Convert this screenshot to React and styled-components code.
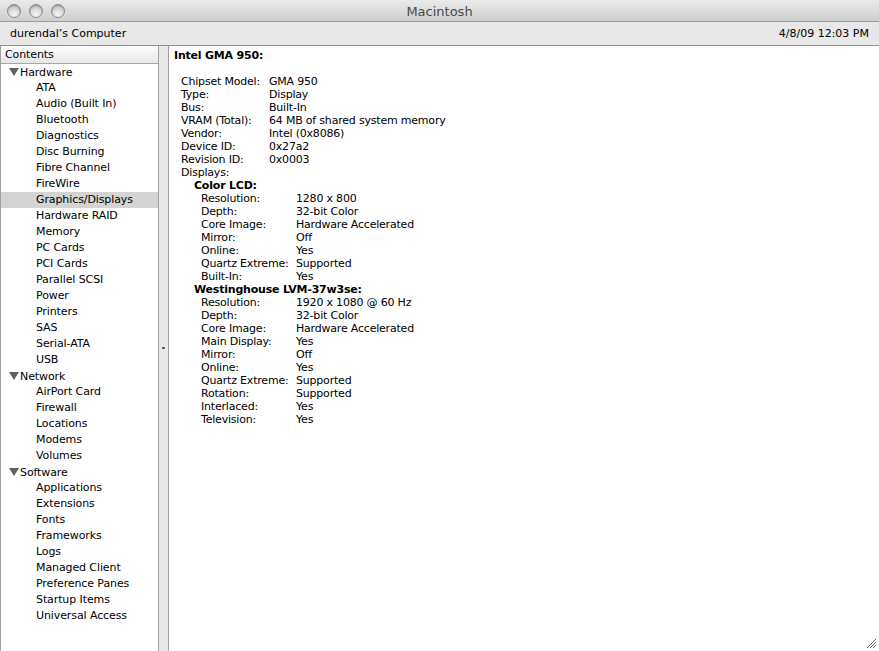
import React from 'react'
import styled, { createGlobalStyle } from 'styled-components'

const GlobalStyle = createGlobalStyle`
  html, body {
    margin: 0;
    padding: 0;
    background: #ffffff;
  }
  body {
    font-family: "DejaVu Sans", "Liberation Sans", sans-serif;
    font-size: 11px;
    color: #000;
  }
`

const sections = [
  {
    title: 'Hardware',
    items: ['ATA', 'Audio (Built In)', 'Bluetooth', 'Diagnostics', 'Disc Burning', 'Fibre Channel',
      'FireWire', 'Graphics/Displays', 'Hardware RAID', 'Memory', 'PC Cards', 'PCI Cards',
      'Parallel SCSI', 'Power', 'Printers', 'SAS', 'Serial-ATA', 'USB']
  },
  {
    title: 'Network',
    items: ['AirPort Card', 'Firewall', 'Locations', 'Modems', 'Volumes']
  },
  {
    title: 'Software',
    items: ['Applications', 'Extensions', 'Fonts', 'Frameworks', 'Logs', 'Managed Client',
      'Preference Panes', 'Startup Items', 'Universal Access']
  }
]

const details = [
  ['Chipset Model:', 'GMA 950'],
  ['Type:', 'Display'],
  ['Bus:', 'Built-In'],
  ['VRAM (Total):', '64 MB of shared system memory'],
  ['Vendor:', 'Intel (0x8086)'],
  ['Device ID:', '0x27a2'],
  ['Revision ID:', '0x0003'],
]

const displays = [
  {
    name: 'Color LCD:',
    rows: [
      ['Resolution:', '1280 x 800'],
      ['Depth:', '32-bit Color'],
      ['Core Image:', 'Hardware Accelerated'],
      ['Mirror:', 'Off'],
      ['Online:', 'Yes'],
      ['Quartz Extreme:', 'Supported'],
      ['Built-In:', 'Yes'],
    ]
  },
  {
    name: 'Westinghouse LVM-37w3se:',
    rows: [
      ['Resolution:', '1920 x 1080 @ 60 Hz'],
      ['Depth:', '32-bit Color'],
      ['Core Image:', 'Hardware Accelerated'],
      ['Main Display:', 'Yes'],
      ['Mirror:', 'Off'],
      ['Online:', 'Yes'],
      ['Quartz Extreme:', 'Supported'],
      ['Rotation:', 'Supported'],
      ['Interlaced:', 'Yes'],
      ['Television:', 'Yes'],
    ]
  }
]

const App = () => {
  return (
    <Window>
      <GlobalStyle />
      <TitleBar>
        <Lights>
          <Light />
          <Light />
          <Light />
        </Lights>
        <Title>Macintosh</Title>
      </TitleBar>
      <InfoBar>
        <span>durendal’s Computer</span>
        <span>4/8/09 12:03 PM</span>
      </InfoBar>
      <Main>
        <Sidebar>
          <SideHeader>Contents</SideHeader>
          {sections.map(sec => (
            <React.Fragment key={sec.title}>
              <GroupRow>
                <Triangle />
                {sec.title}
              </GroupRow>
              {sec.items.map(item => (
                <ItemRow key={item} selected={item === 'Graphics/Displays'}>{item}</ItemRow>
              ))}
            </React.Fragment>
          ))}
        </Sidebar>
        <Splitter>
          <Dimple />
        </Splitter>
        <Content>
          <Heading>Intel GMA 950:</Heading>
          <Spacer />
          <Table labelWidth={88} indent={7}>
            {details.map(([k, v]) => (
              <React.Fragment key={k}>
                <Label>{k}</Label>
                <Value>{v}</Value>
              </React.Fragment>
            ))}
            <Label>Displays:</Label>
            <Value />
          </Table>
          {displays.map(d => (
            <React.Fragment key={d.name}>
              <SubHeading>{d.name}</SubHeading>
              <Table labelWidth={95} indent={27}>
                {d.rows.map(([k, v]) => (
                  <React.Fragment key={k}>
                    <Label>{k}</Label>
                    <Value>{v}</Value>
                  </React.Fragment>
                ))}
              </Table>
            </React.Fragment>
          ))}
          <Grip>
            <svg width="11" height="11" viewBox="0 0 11 11">
              <path d="M10 1 L1 10 M10 4 L4 10 M10 7 L7 10" stroke="#6e6e6e" strokeWidth="1" />
              <path d="M11 2 L2 11 M11 5 L5 11 M11 8 L8 11" stroke="#ffffff" strokeWidth="1" />
            </svg>
          </Grip>
        </Content>
      </Main>
    </Window>
  )
}

const Window = styled.div`
  display: flex;
  flex-direction: column;
  width: 879px;
  height: 651px;
  overflow: hidden;
  background: #e8e8e8;
`
const TitleBar = styled.div`
  position: relative;
  height: 21px;
  display: flex;
  align-items: center;
  justify-content: center;
  background: linear-gradient(#eaeaea, #cfcfcf);
  border-bottom: 1px solid #9a9a9a;
`
const Lights = styled.div`
  position: absolute;
  left: 7px;
  top: 4px;
  display: flex;
  gap: 8px;
`
const Light = styled.div`
  width: 14px;
  height: 14px;
  border-radius: 50%;
  border: 1px solid #8a8a8a;
  box-sizing: border-box;
  background: radial-gradient(circle at 50% 78%, #f6f6f6 0%, #d8d8d8 50%, #acacac 100%);
  box-shadow: inset 0 1px 1px rgba(0,0,0,0.2);
`
const Title = styled.div`
  font-size: 13px;
  color: #4a4a4a;
  padding-top: 1px;
`
const InfoBar = styled.div`
  height: 23px;
  display: flex;
  align-items: center;
  justify-content: space-between;
  padding: 0 10px 0 10px;
  background: #e8e8e8;
  border-bottom: 1px solid #8f8f8f;
`
const Main = styled.div`
  display: flex;
  flex: 1;
  min-height: 0;
`
const Sidebar = styled.div`
  width: 157px;
  background: #ffffff;
  border-left: 1px solid #a0a0a0;
  border-right: 1px solid #a0a0a0;
  letter-spacing: -0.1px;
`
const SideHeader = styled.div`
  height: 17px;
  line-height: 17px;
  padding-left: 4px;
  background: linear-gradient(#ffffff, #e6e6e6);
  border-bottom: 1px solid #a8a8a8;
`
const GroupRow = styled.div`
  display: flex;
  align-items: center;
  height: 16px;
  padding-left: 8px;
`
const Triangle = styled.span`
  width: 0;
  height: 0;
  border-left: 5px solid transparent;
  border-right: 5px solid transparent;
  border-top: 8px solid #606060;
  margin-right: 1px;
`
const ItemRow = styled.div`
  height: 16px;
  line-height: 16px;
  padding-left: 35px;
  background: ${p => (p.selected ? '#d4d4d4' : 'transparent')};
`
const Splitter = styled.div`
  position: relative;
  width: 9px;
  background: #e8e8e8;
  border-right: 1px solid #a0a0a0;
`
const Dimple = styled.div`
  position: absolute;
  left: 3px;
  top: 301px;
  width: 3px;
  height: 2px;
  background: #444;
  border-radius: 1px;
`
const Content = styled.div`
  position: relative;
  flex: 1;
  background: #ffffff;
  padding: 3px 0 0 5px;
  line-height: 13px;
  letter-spacing: -0.2px;
`
const Heading = styled.div`
  font-weight: bold;
`
const Spacer = styled.div`
  height: 13px;
`
const Table = styled.div`
  display: grid;
  grid-template-columns: ${p => p.labelWidth}px auto;
  justify-content: start;
  padding-left: ${p => p.indent}px;
`
const Label = styled.div`
  white-space: nowrap;
`
const Value = styled.div`
  white-space: nowrap;
`
const SubHeading = styled.div`
  font-weight: bold;
  padding-left: 20px;
`
const Grip = styled.div`
  position: absolute;
  right: 2px;
  bottom: 2px;
  width: 11px;
  height: 11px;
`

export default App
